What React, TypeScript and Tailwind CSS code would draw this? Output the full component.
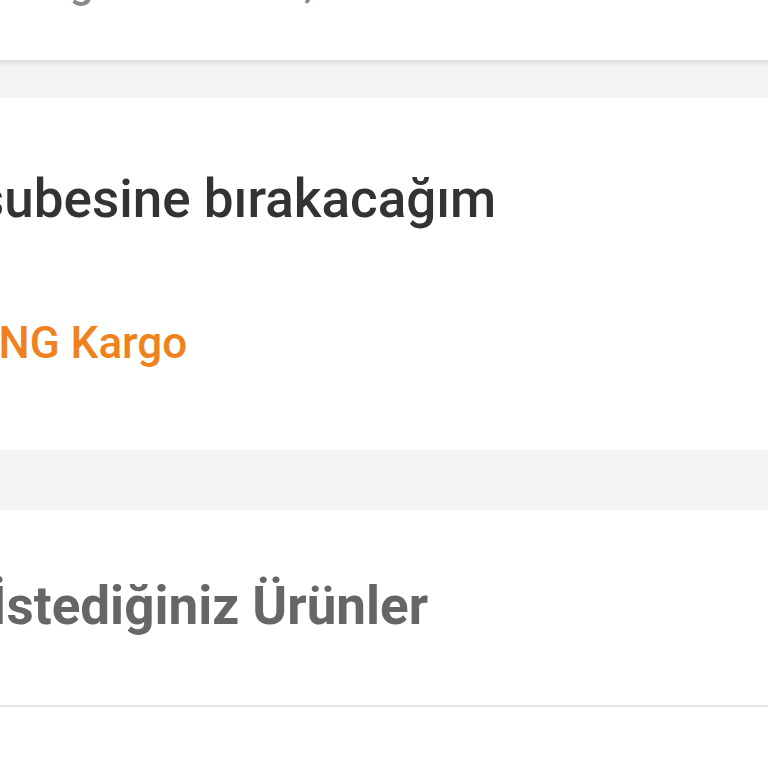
export default function App() {
  return (
    <div className="w-[768px] h-[768px] overflow-hidden bg-white font-['Roboto',sans-serif] flex flex-col">
      {/* previous card, only its last line's bottom is in view */}
      <div className="h-[60px] shrink-0 overflow-hidden bg-white">
        <p className="mt-[-38px] ml-[6px] text-[42px] leading-none font-medium text-[#8a8a8a] whitespace-nowrap">
          Kargo ücreti: 12,99 TL
        </p>
      </div>

      <div className="h-[38px] shrink-0 bg-[linear-gradient(#dcdcdc,#f4f4f4_7px)]" />

      {/* delivery option */}
      <div className="h-[352px] shrink-0 bg-white overflow-hidden">
        <p className="mt-[75px] ml-[-23px] text-[53px] leading-none font-medium text-[#333333] whitespace-nowrap">
          subesine bırakacağım
        </p>
        <p className="mt-[95px] ml-[-40px] text-[44px] leading-none font-medium text-[#f0821e] whitespace-nowrap">
          MNG Kargo
        </p>
      </div>

      <div className="h-[60px] shrink-0 bg-[#f4f4f4]" />

      {/* returned products */}
      <div className="h-[197px] shrink-0 bg-white border-b-2 border-[#e6e6e6] overflow-hidden">
        <p className="mt-[70px] ml-[-9px] text-[53px] leading-none font-bold text-[#666666] whitespace-nowrap">
          İstediğiniz Ürünler
        </p>
      </div>

      <div className="flex-1 bg-white" />
    </div>
  );
}
